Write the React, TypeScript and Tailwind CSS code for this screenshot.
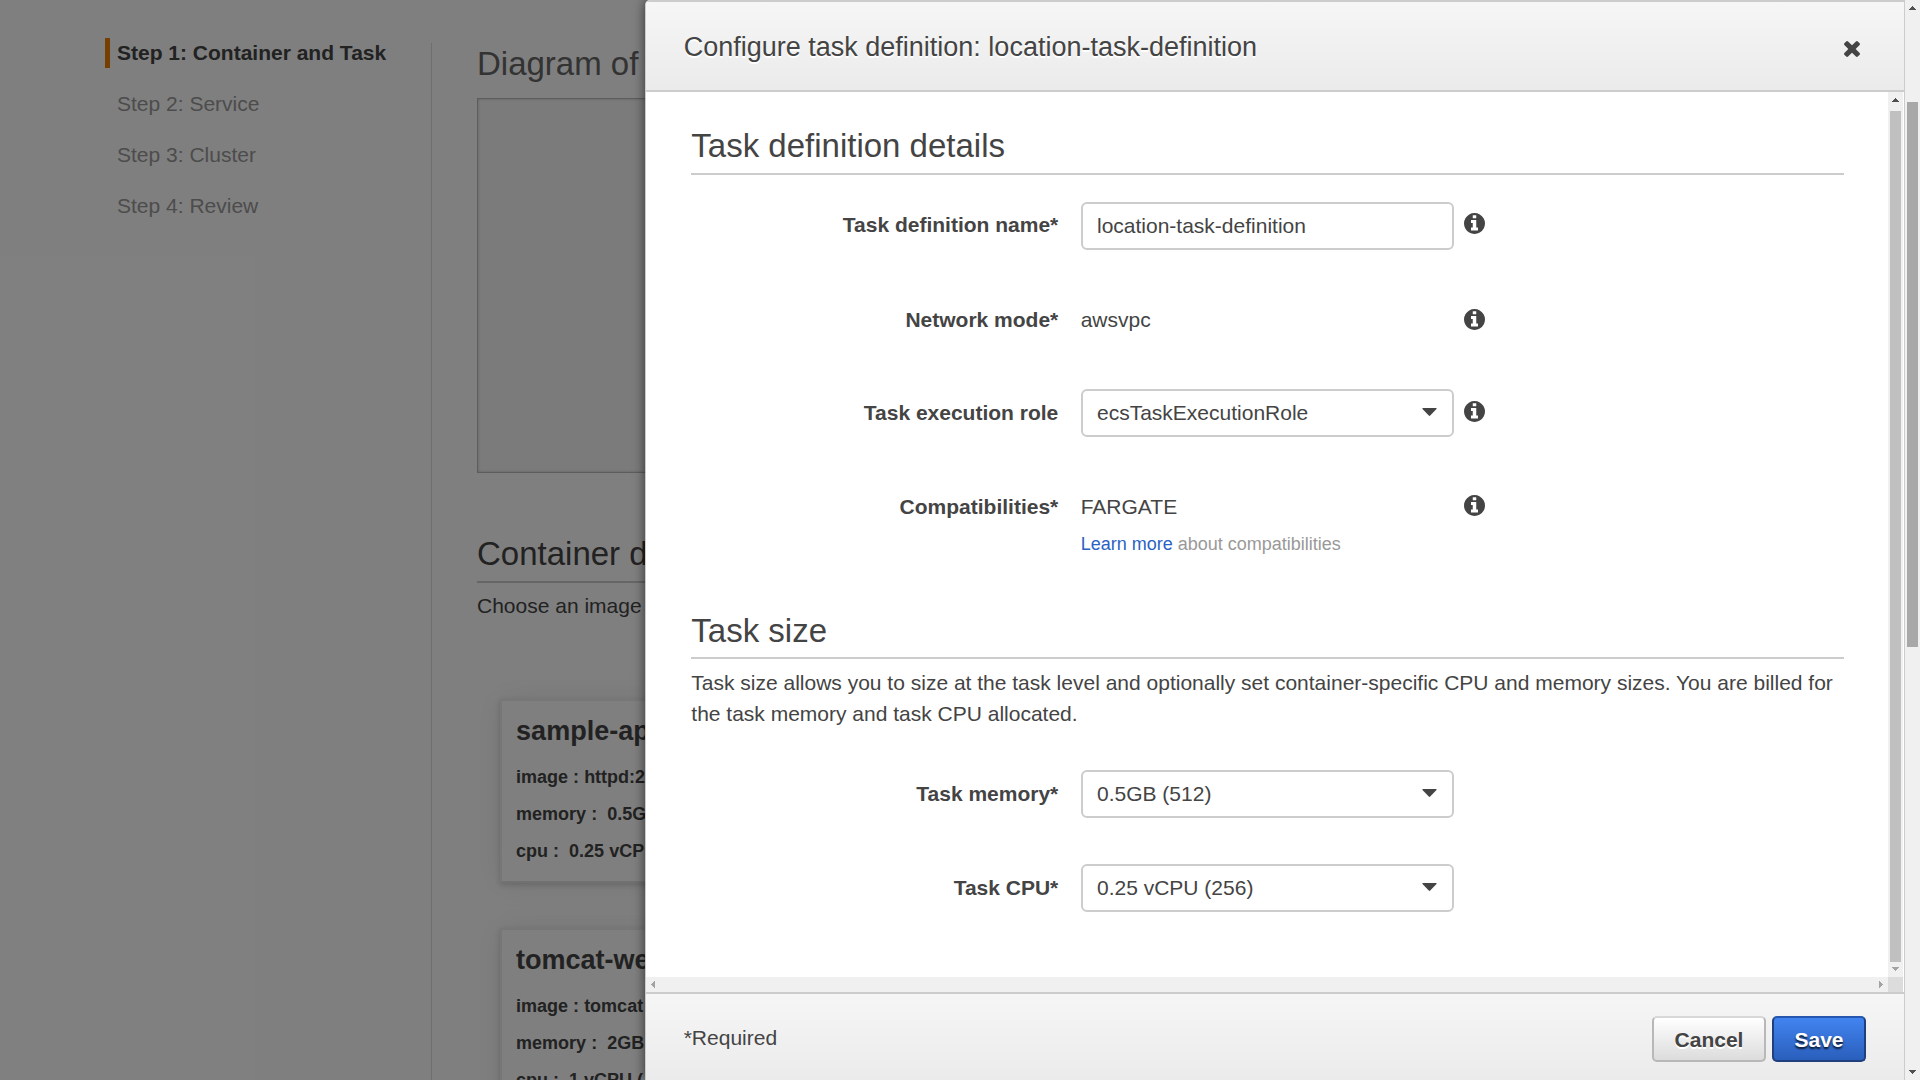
import React from "react";

const steps = ["Step 2: Service", "Step 3: Cluster", "Step 4: Review"];

const containers = [
  { name: "sample-app", image: "httpd:2.4", memory: "0.5GB", cpu: "0.25 vCPU" },
  { name: "tomcat-web", image: "tomcat", memory: "2GB", cpu: "1 vCPU (" },
];

function Arrow({ dir, className }: { dir: "up" | "down" | "left" | "right"; className: string }) {
  const paths = {
    up: "M3 0h1v1h1v1h1v1h1v1H0V3h1V2h1V1h1z",
    down: "M0 0h7v1H6v1H5v1H4v1H3V3H2V2H1V1H0z",
    left: "M4 0v7H3V6H2V5H1V4H0V3h1V2h1V1h1V0z",
    right: "M0 0v7h1V6h1V5h1V4h1V3H3V2H2V1H1V0z",
  };
  const vertical = dir === "up" || dir === "down";
  return (
    <svg
      width={vertical ? 7 : 4}
      height={vertical ? 4 : 7}
      viewBox={vertical ? "0 0 7 4" : "0 0 4 7"}
      shapeRendering="crispEdges"
      className={`shrink-0 ${className}`}
      fill="currentColor"
    >
      <path d={paths[dir]} />
    </svg>
  );
}

function InfoIcon({ className }: { className: string }) {
  return (
    <svg viewBox="128 128 1536 1536" className={`ml-[10.3px] h-[21px] w-[21px] shrink-0 ${className}`} fill="#444">
      <path d="M1152 1376v-160q0-14-9-23t-23-9h-96v-512q0-14-9-23t-23-9h-320q-14 0-23 9t-9 23v160q0 14 9 23t23 9h96v320h-96q-14 0-23 9t-9 23v160q0 14 9 23t23 9h448q14 0 23-9t9-23zm-128-896v-160q0-14-9-23t-23-9h-192q-14 0-23 9t-9 23v160q0 14 9 23t23 9h192q14 0 23-9t9-23zm640 416q0 209-103 385.500t-279.500 279.500-385.500 103-385.500-103-279.500-279.500-103-385.500 103-385.500 279.500-279.500 385.500-103 385.500 103 279.500 279.500 103 385.500z" />
    </svg>
  );
}

function Row({
  label,
  className,
  labelClass = "pt-[9px]",
  children,
}: {
  label: string;
  className: string;
  labelClass?: string;
  children: React.ReactNode;
}) {
  return (
    <div className={`flex items-start ${className}`}>
      <div className={`w-[367px] shrink-0 text-right font-bold leading-[30px] ${labelClass}`}>{label}</div>
      <div className="w-[22.4px] shrink-0" />
      {children}
    </div>
  );
}

function Field({ value, select = false }: { value: string; select?: boolean }) {
  return (
    <div className="flex h-12 w-[373px] shrink-0 items-center justify-between rounded-[6px] border-2 border-[#ccc] bg-white pl-[14.3px] pr-[14.7px] leading-[30px]">
      <span>{value}</span>
      {select && (
        <svg width="15" height="8" viewBox="0 0 15 8" className="-mt-[2px]" fill="#444">
          <path d="M1 0h13q1 .2.5 1L8.200 7.600q-.7.6-1.400 0L.5 1Q0 .2 1 0z" />
        </svg>
      )}
    </div>
  );
}

function SectionTitle({ children, className }: { children: React.ReactNode; className: string }) {
  return <h2 className={`border-b-2 border-[#ccc] text-[33px] leading-10 ${className}`}>{children}</h2>;
}

function Background() {
  return (
    <div className="flex h-full bg-white pl-[105px]">
      <nav className="w-[326px] shrink-0 pt-[38px]">
        <div className="h-[30px] border-l-[5px] border-[#ec7c00] pl-[7px] font-bold leading-[30px]">
          Step 1: Container and Task
        </div>
        {steps.map((s) => (
          <div key={s} className="mt-[21px] h-[30px] pl-3 leading-[30px] text-[#999]">
            {s}
          </div>
        ))}
      </nav>
      <div className="mt-[43px] w-px shrink-0 bg-[#ddd]" />
      <main className="ml-[45px] w-[1300px] shrink-0">
        <h1 className="mt-11 text-[33px] leading-10 text-[#666]">Diagram of</h1>
        <div className="mt-[14px] h-[375px] border border-[#bbb] bg-[#f7f7f7] shadow-[inset_0_0_3px_#bbb]" />
        <SectionTitle className="mt-[61px] pb-[7px]">Container definition</SectionTitle>
        <p className="mt-2 leading-[30px]">Choose an image</p>
        <div className="ml-[22.6px] mt-[78px] flex flex-col gap-[45px]">
          {containers.map((c) => (
            <div
              key={c.name}
              className="h-[184px] w-[504px] border-2 border-[#eee] border-b-[#e2e2e2] bg-white pl-[14.5px] pt-[14px] text-lg font-bold shadow-[0_2px_6px_rgba(0,0,0,0.16),0_0_30px_rgba(0,0,0,0.08)]"
            >
              <div className="text-[27px] leading-8">{c.name}</div>
              <div className="mt-3 whitespace-pre leading-[37px]">
                <div>image : {c.image}</div>
                <div>memory :  {c.memory}</div>
                <div>cpu :  {c.cpu}</div>
              </div>
            </div>
          ))}
        </div>
      </main>
    </div>
  );
}

function Modal() {
  return (
    <div
      role="dialog"
      className="absolute inset-y-0 right-0 flex w-[1260px] flex-col overflow-hidden rounded-tl-[5px] border-x border-[#ccc] bg-white shadow-[0_0_12px_rgba(0,0,0,0.6)]"
    >
      <header className="flex h-[92px] shrink-0 items-start justify-between border-y-2 border-[#ccc] bg-linear-to-b from-[#f6f6f6] to-[#ebebeb] pl-[37.7px] pr-[44px]">
        <h1 className="mt-[29px] text-[27px] leading-8 [text-shadow:0_2px_0_#fff]">
          Configure task definition: location-task-definition
        </h1>
        <svg viewBox="302 366 1188 1188" className="mt-[39px] h-4 w-4" fill="#444">
          <path d="M1490 1322q0 40-28 68l-136 136q-28 28-68 28t-68-28l-294-294-294 294q-28 28-68 28t-68-28l-136-136q-28-28-28-68t28-68l294-294-294-294q-28-28-28-68t28-68l136-136q28-28 68-28t68 28l294 294 294-294q28-28 68-28t68 28l136 136q28 28 28 68t-28 68l-294 294 294 294q28 28 28 68z" />
        </svg>
      </header>

      <div className="mr-px flex h-[885px] shrink-0">
        <div className="w-[1242px] pl-[45.3px] pr-11">
          <SectionTitle className="mt-[34px] pb-[7px]">Task definition details</SectionTitle>
          <Row label="Task definition name*" className="mt-[27px] h-[94px]" labelClass="pt-2">
            <Field value="location-task-definition" />
            <InfoIcon className="mt-[11px]" />
          </Row>
          <Row label="Network mode*" className="h-[93px]">
            <div className="w-[373px] pt-[9px] leading-[30px]">awsvpc</div>
            <InfoIcon className="mt-[13px]" />
          </Row>
          <Row label="Task execution role" className="h-[94px]">
            <Field value="ecsTaskExecutionRole" select />
            <InfoIcon className="mt-3" />
          </Row>
          <Row label="Compatibilities*" className="h-[128px]">
            <div className="w-[373px] pt-[9px] leading-[30px]">
              <div>FARGATE</div>
              <div className="mt-[9px] text-lg leading-[26px] text-[#999]">
                <span className="text-[#2a62c4]">Learn more</span> about compatibilities
              </div>
            </div>
            <InfoIcon className="mt-3" />
          </Row>
          <SectionTitle className="pb-[6px]">Task size</SectionTitle>
          <p className="mt-2 leading-[31px]">
            Task size allows you to size at the task level and optionally set container-specific CPU and memory sizes.
            You are billed for the task memory and task CPU allocated.
          </p>
          <Row label="Task memory*" className="mt-[41px] h-[94px]">
            <Field value="0.5GB (512)" select />
          </Row>
          <Row label="Task CPU*" className="">
            <Field value="0.25 vCPU (256)" select />
          </Row>
        </div>
        <div className="flex w-[15px] flex-col items-center bg-[#f0f0f0]">
          <Arrow dir="up" className="mt-[6px] text-[#505050]" />
          <div className="mt-[9px] h-[851px] w-[11px] bg-[#c0c0c0]" />
          <Arrow dir="down" className="mt-[5px] text-[#a3a3a3]" />
        </div>
      </div>
      <div className="mr-px flex h-[15px] shrink-0 bg-[#f0f0f0]">
        <div className="flex flex-1 items-center justify-between pl-[5px] pr-[5px]">
          <Arrow dir="left" className="text-[#a3a3a3]" />
          <Arrow dir="right" className="text-[#a3a3a3]" />
        </div>
        <div className="w-[15px] bg-[#dcdcdc]" />
      </div>

      <footer className="flex flex-1 items-start border-t-2 border-[#ccc] bg-linear-to-b from-[#f6f6f6] to-[#ebebeb] pl-[37.7px] pr-[38px]">
        <span className="mt-[29px] leading-[30px]">*Required</span>
        <button className="ml-auto mt-[22px] h-[46px] w-[114px] rounded-[5px] border-2 border-[#b8b8b8] border-t-[#d8d8d8] bg-linear-to-b from-white to-[#dcdcdc] pt-px font-bold [text-shadow:0_2px_0_#fff]">
          Cancel
        </button>
        <button className="ml-[6px] mt-[22px] h-[46px] w-[94px] rounded-[5px] border-2 border-[#1f3f7d] border-t-[#2557b0] bg-linear-to-b from-[#4284f0] to-[#2a5fbc] pt-px font-bold text-white [text-shadow:0_2px_2px_rgba(0,0,0,0.8)]">
          Save
        </button>
      </footer>
    </div>
  );
}

export default function App() {
  return (
    <div className="flex h-[1080px] w-[1920px] overflow-hidden font-['Liberation_Sans',Arial,sans-serif] text-[21px] text-[#444]">
      <div className="relative h-full w-[1905px] shrink-0 overflow-hidden">
        <Background />
        <div className="absolute inset-0 bg-black/50" />
        <Modal />
      </div>
      <div className="flex w-[15px] flex-col items-center bg-[#f0f0f0]">
        <Arrow dir="up" className="mt-[6px] text-[#505050]" />
        <div className="mt-[92px] h-[545px] w-[11px] bg-[#a8a8a8]" />
        <Arrow dir="down" className="mb-[6px] mt-auto text-[#505050]" />
      </div>
    </div>
  );
}
